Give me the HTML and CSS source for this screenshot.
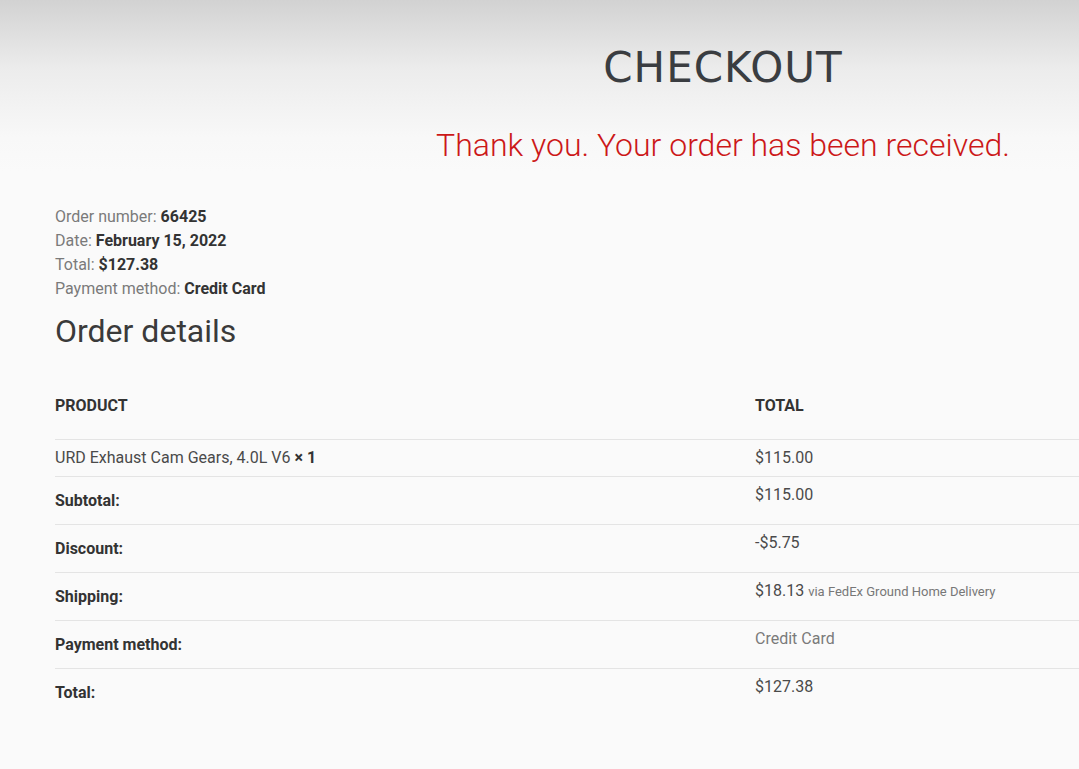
FILE: index.html
```html
<!DOCTYPE html>
<html lang="en">
<head>
<meta charset="UTF-8">
<meta name="viewport" content="width=device-width, initial-scale=1.0">
<title>Checkout</title>
<link rel="stylesheet" href="styles.css">
</head>
<body>

<div id="header">
    <div class="headerInner">
        <h1>CHECKOUT</h1>
        <p class="thankYou">Thank you. Your order has been received.</p>
    </div>
</div>

<div id="content">
    <ul class="orderOverview">
        <li>Order number: <strong>66425</strong></li>
        <li>Date: <strong>February 15, 2022</strong></li>
        <li>Total: <strong>$127.38</strong></li>
        <li>Payment method: <strong>Credit Card</strong></li>
    </ul>

    <h2>Order details</h2>

    <table class="orderTable">
        <thead>
            <tr>
                <th class="productCol">Product</th>
                <th class="totalCol">Total</th>
            </tr>
        </thead>
        <tbody>
            <tr>
                <td>URD Exhaust Cam Gears, 4.0L V6 <strong>&times;&nbsp;1</strong></td>
                <td>$115.00</td>
            </tr>
        </tbody>
        <tfoot>
            <tr>
                <th>Subtotal:</th>
                <td>$115.00</td>
            </tr>
            <tr>
                <th>Discount:</th>
                <td>-$5.75</td>
            </tr>
            <tr>
                <th>Shipping:</th>
                <td>$18.13 <small>via FedEx Ground Home Delivery</small></td>
            </tr>
            <tr>
                <th>Payment method:</th>
                <td class="muted">Credit Card</td>
            </tr>
            <tr>
                <th>Total:</th>
                <td>$127.38</td>
            </tr>
        </tfoot>
    </table>
</div>

</body>
</html>
```

FILE: styles.css
```css
body {
    margin: 0;
    font-family: Roboto, 'Liberation Sans', sans-serif;
    background-color: #fafafa;
    color: #444;
}

#header {
    height: 172px;
    background: linear-gradient(to bottom, #d2d2d2 0%, #ececec 40%, #f8f8f8 80%, #fafafa 100%);
}

#header .headerInner {
    margin-left: 367px;
    text-align: center;
    padding-top: 42px;
}

#header h1 {
    margin: 0;
    font-family: 'DejaVu Sans', sans-serif;
    font-weight: normal;
    font-size: 42px;
    line-height: 52px;
    letter-spacing: 1px;
    color: #3a3d41;
}

#header .thankYou {
    margin: 31px 0 0 0;
    font-size: 32px;
    font-weight: 300;
    line-height: 40px;
    color: #cc1818;
}

#content {
    padding-left: 55px;
    padding-top: 33px;
}

.orderOverview {
    list-style: none;
    margin: 0;
    padding: 0;
    font-size: 16px;
    line-height: 24px;
    color: #7a7a7a;
}

.orderOverview strong {
    color: #333;
}

#content h2 {
    margin: 10px 0 0 0;
    font-size: 32px;
    font-weight: normal;
    line-height: 40px;
    color: #3a3a3a;
}

.orderTable {
    width: 100%;
    border-collapse: collapse;
    margin-top: 34px;
    font-size: 16px;
}

.orderTable th,
.orderTable td {
    text-align: left;
    padding: 0;
    line-height: 24px;
}

.orderTable thead th {
    text-transform: uppercase;
    font-size: 16px;
    color: #333;
    padding: 9px 0 21px 0;
}

.orderTable .productCol {
    width: 700px;
}

.orderTable tbody td,
.orderTable tfoot td {
    border-top: 1px solid #e4e4e4;
    vertical-align: top;
    padding: 6px 0;
    color: #4a4a4a;
}

.orderTable tbody td strong {
    color: #333;
}

.orderTable tfoot th {
    border-top: 1px solid #e4e4e4;
    font-size: 16px;
    color: #333;
    padding: 12px 0 11px 0;
    vertical-align: middle;
}

.orderTable small {
    font-size: 13px;
    color: #777;
}

.orderTable .muted {
    color: #7a7a7a;
}
```
